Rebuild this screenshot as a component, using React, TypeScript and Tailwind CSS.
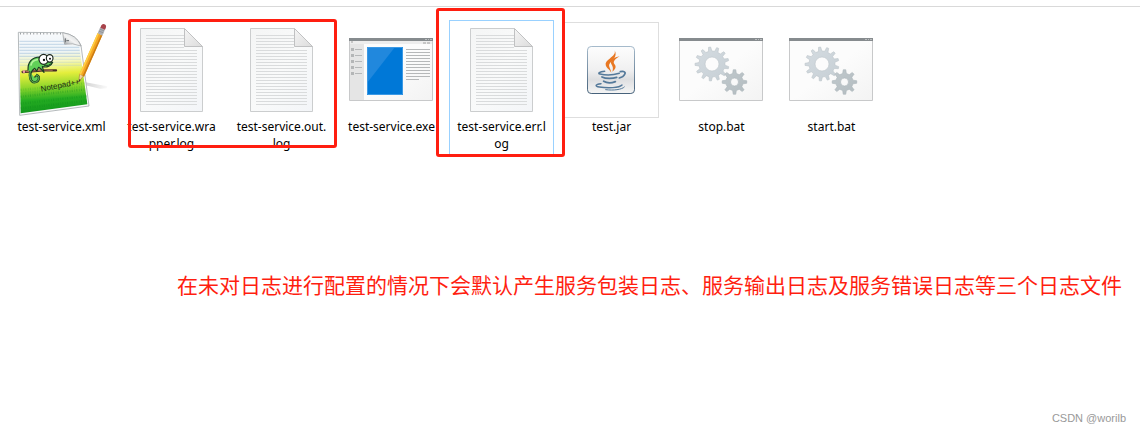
import type { ReactNode } from 'react';

type FileItem = {
  name: string;
  lines: string[];
  icon: ReactNode;
  state?: 'selected' | 'framed';
};

// Outline of a gear with rounded-off teeth
function gearPath(cx: number, cy: number, outer: number, inner: number, hole: number, teeth: number, turn: number) {
  const step = (Math.PI * 2) / teeth;
  const point = (r: number, a: number) => `${(cx + r * Math.cos(a)).toFixed(2)} ${(cy + r * Math.sin(a)).toFixed(2)}`;
  const parts: string[] = [];
  for (let i = 0; i < teeth; i++) {
    const a = turn + i * step;
    parts.push(
      point(inner, a - step * 0.27),
      point(outer, a - step * 0.13),
      point(outer, a + step * 0.13),
      point(inner, a + step * 0.27)
    );
  }
  return `M${parts.join('L')}Z M${cx + hole} ${cy}a${hole} ${hole} 0 1 0 ${-hole * 2} 0a${hole} ${hole} 0 1 0 ${hole * 2} 0Z`;
}

function NotepadIcon() {
  return (
    <svg className="w-24 h-24" viewBox="39 66 288 288" aria-hidden="true">
      <defs>
        <linearGradient id="np-page" x1="0" y1="0" x2="0.05" y2="1">
          <stop offset="0" stopColor="#f8fafc" />
          <stop offset="0.24" stopColor="#edf4f8" />
          <stop offset="0.36" stopColor="#f6f8c4" />
          <stop offset="0.52" stopColor="#e4ee3c" />
          <stop offset="0.68" stopColor="#8fd62c" />
          <stop offset="0.84" stopColor="#25ad22" />
          <stop offset="1" stopColor="#12961c" />
        </linearGradient>
        <linearGradient id="np-curl" x1="0" y1="1" x2="1" y2="0">
          <stop offset="0" stopColor="#8d9296" />
          <stop offset="0.45" stopColor="#f4f4f4" />
          <stop offset="1" stopColor="#c4c8ca" />
        </linearGradient>
        <linearGradient id="np-shadow" x1="0" y1="0" x2="1" y2="0">
          <stop offset="0" stopColor="#c8c8c8" />
          <stop offset="1" stopColor="#fafafa" />
        </linearGradient>
      </defs>
      <path d="M236 243L322 259L320 265L300 266L238 251Z" fill="url(#np-shadow)" />
      <path d="M55 97L188 98Q230 105 243 136L267 318L59 346Z" fill="#fafafa" stroke="#a7adb0" strokeWidth="2.5" />
      <path d="M58 102L186 103L194 133L238 137L262 313L62 340Z" fill="url(#np-page)" />
      <g stroke="#a9c6dc" strokeWidth="2">
        <path d="M58 124H192M58 133H194M58 142H238M58 151H239M58 160H240M58 169H241" />
        <path d="M58 178H242M58 187H243M58 196H244" opacity="0.5" />
      </g>
      <path d="M62 311L260 288M62 290L257 268M62 325L261 302" stroke="#0d8a1b" strokeWidth="7" strokeDasharray="3 5 2 4" opacity="0.35" />
      <path d="M62 270L253 250M62 281L255 259" stroke="#48b824" strokeWidth="7" strokeDasharray="3 5 2 4" opacity="0.4" />
      <path d="M60 101H184" stroke="#8d9295" strokeWidth="5" strokeDasharray="2.5 7.5" />
      <path d="M188 98Q231 104 243 138Q218 128 194 133Q190 116 188 98Z" fill="url(#np-curl)" stroke="#94999c" strokeWidth="2" />
      <path d="M196 115V127M199 122H207" stroke="#62686b" strokeWidth="3" />
      <path d="M68 216L130 211L168 211" fill="none" stroke="#472c25" strokeWidth="7" strokeLinecap="round" />
      <path d="M78 215L132 210L158 211" fill="none" stroke="#a76f5a" strokeWidth="3" />
      <circle cx="72" cy="215" r="4" fill="#ef9aa4" />
      <path
        d="M84 211C83 185 94 172 120 171C129 181 146 186 158 187C154 197 142 203 127 200L132 217L124 208L116 202L110 213L104 205C93 212 89 226 94 239C99 251 116 247 118 235C119 224 105 224 104 233"
        fill="#61d158"
        stroke="#193a22"
        strokeWidth="3.5"
        strokeLinejoin="round"
      />
      <path d="M91 213C86 231 92 246 103 247C119 247 121 225 108 225" fill="none" stroke="#24482a" strokeWidth="7" />
      <path d="M91 213C86 231 92 246 103 247C119 247 121 225 108 225" fill="none" stroke="#63be50" strokeWidth="3" />
      <path d="M93 195Q96 181 112 179" fill="none" stroke="#b3f29a" strokeWidth="5" strokeLinecap="round" />
      <ellipse cx="131" cy="178" rx="14" ry="15" fill="#fff" stroke="#1d2820" strokeWidth="3.5" />
      <ellipse cx="149" cy="175" rx="10" ry="11" fill="#fff" stroke="#1d2820" strokeWidth="3.5" />
      <circle cx="132" cy="180" r="3.5" fill="#111" />
      <circle cx="150" cy="176" r="3" fill="#111" />
      <path d="M132 196Q146 199 156 190" fill="none" stroke="#193a22" strokeWidth="3" />
      <text x="124" y="275" fontSize="24" fill="#1c2a14" transform="rotate(-11 124 275)" className="font-['Liberation_Sans',sans-serif]">
        Notepad++
      </text>
      <path d="M236 246L239 222L250 228Z" fill="#f0cf9c" stroke="#9a6d31" strokeWidth="1.5" />
      <path d="M236 247L238 237L242 240Z" fill="#36322c" />
      <path d="M238 223L293 99L307 106L252 230Q246 223 238 223Z" fill="#f5a623" />
      <path d="M238 223L293 99L297 101L243 224Z" fill="#ffd046" />
      <path d="M248 227L303 104L307 106L252 230Z" fill="#cb7b13" />
      <path d="M293 100L301 82L315 88L307 107Z" fill="#aeb1b5" />
      <path d="M296 93L311 99M299 87L313 93" stroke="#74797e" strokeWidth="1.5" />
      <path d="M301 83L304 76Q310 69 316 74Q321 78 315 89Z" fill="#a8434b" />
    </svg>
  );
}

function LogIcon() {
  return (
    <svg className="w-16 h-[84px]" viewBox="0 0 64 84" aria-hidden="true">
      <defs>
        <linearGradient id="log-page" x1="0" y1="0" x2="1" y2="1">
          <stop offset="0" stopColor="#f4f5f5" />
          <stop offset="0.5" stopColor="#f9fafa" />
          <stop offset="1" stopColor="#f3f5f8" />
        </linearGradient>
        <linearGradient id="log-fold" x1="0" y1="0" x2="1" y2="1">
          <stop offset="0" stopColor="#f5f5f5" />
          <stop offset="1" stopColor="#dcdcdc" />
        </linearGradient>
      </defs>
      <path d="M1.5 0.5H45L63.5 18.5V83.5H1.5Z" fill="url(#log-page)" stroke="#cbcdce" />
      <path
        d="M7 7.5H45M7 10.5H45M7 13.5H45M7 16.5H45M7 19.5H45M7 22.5H58M7 25.5H58M7 28.5H58M7 31.5H58M7 34.5H58M7 37.5H58M7 40.5H58M7 43.5H58M7 46.5H58M7 49.5H58M7 52.5H58M7 55.5H58M7 58.5H58M7 61.5H58M7 64.5H58M7 67.5H58M7 70.5H58M7 73.5H58M7 76.5H58"
        stroke="#d9dbdc"
      />
      <path d="M45.5 0.5V18.5H63.5Z" fill="url(#log-fold)" stroke="#c0c1c2" />
    </svg>
  );
}

function WindowFrame({ children }: { children: ReactNode }) {
  return (
    <svg className="w-[84px] h-16" viewBox="0 0 84 64" aria-hidden="true">
      <defs>
        <linearGradient id="win-body" x1="0" y1="0" x2="1" y2="1">
          <stop offset="0.5" stopColor="#fcfcfc" />
          <stop offset="1" stopColor="#f3f3f3" />
        </linearGradient>
      </defs>
      <path d="M0.5 0.5H83.5V62.5H0.5Z" fill="url(#win-body)" stroke="#c8c9ca" />
      {children}
      <path d="M0 0H84V3H0Z" fill="#868b8e" />
      <path d="M76 1.5H78M79 1.5H80M81 1.5H83" stroke="#b9bcbe" />
    </svg>
  );
}

function ExeIcon() {
  return (
    <WindowFrame>
      <path d="M1 3H83V6H1Z" fill="#ededed" />
      <path d="M1 6H15V62H1Z" fill="#e5e5e5" />
      <path d="M2 3H4V5H2ZM74 4H77V6H74ZM78 4H81V6H78Z" fill="#c6c6c6" />
      <path d="M2 10H5V13H2ZM2 16H5V19H2ZM2 22H5V25H2ZM2 28H5V31H2ZM2 34H5V37H2Z" fill="#b4b6b7" />
      <path d="M6 11.5H13M6 17.5H13M6 23.5H13M6 29.5H13M6 35.5H13" stroke="#b6b8b9" />
      <path d="M18 9H54V57H18Z" fill="#0078d7" />
      <path d="M18 9H46L18 45Z" fill="#2188dd" />
      <path d="M18.5 9.5H53.5V56.5H18.5Z" fill="none" stroke="#3b99e5" />
      <path d="M57 11.5H81M57 14.5H81M57 17.5H81M57 20.5H81M57 23.5H81M57 26.5H81M57 29.5H81M57 32.5H81M57 35.5H81M57 38.5H81M57 41.5H70" stroke="#b6b8b9" />
    </WindowFrame>
  );
}

function BatIcon() {
  return (
    <WindowFrame>
      <defs>
        <linearGradient id="gear-light" x1="0" y1="0" x2="1" y2="1">
          <stop offset="0" stopColor="#d5dce1" />
          <stop offset="1" stopColor="#c6cfd5" />
        </linearGradient>
        <linearGradient id="gear-dark" x1="0" y1="0" x2="1" y2="1">
          <stop offset="0" stopColor="#c1c9cd" />
          <stop offset="1" stopColor="#b3bcc0" />
        </linearGradient>
      </defs>
      <path d={gearPath(33, 26, 17, 13, 7, 13, 0.22)} fill="url(#gear-light)" stroke="#bcc5ca" strokeWidth="0.6" strokeLinejoin="round" fillRule="evenodd" />
      <path d={gearPath(55.5, 44, 12.3, 8.7, 4, 8, 0)} fill="url(#gear-dark)" stroke="#aab4b8" strokeWidth="0.6" strokeLinejoin="round" fillRule="evenodd" />
    </WindowFrame>
  );
}

function JarIcon() {
  return (
    <svg className="w-12 h-12" viewBox="81 108 144 144" aria-hidden="true">
      <defs>
        <linearGradient id="jar-tile" x1="0" y1="0" x2="0" y2="1">
          <stop offset="0" stopColor="#fdfdfd" />
          <stop offset="0.5" stopColor="#f0f0f1" />
          <stop offset="0.7" stopColor="#dedfe1" />
          <stop offset="1" stopColor="#f5f5f5" />
        </linearGradient>
        <linearGradient id="jar-edge" x1="0" y1="0" x2="0" y2="1">
          <stop offset="0" stopColor="#a5bacb" />
          <stop offset="1" stopColor="#47627b" />
        </linearGradient>
      </defs>
      <rect x="82.5" y="109.5" width="141" height="141" rx="11" fill="url(#jar-tile)" stroke="url(#jar-edge)" strokeWidth="3" />
      <path d="M164 121C170 140 137 147 137 163C137 173 148 178 154 188C152 176 145 170 148 163C152 153 175 143 164 121Z" fill="#e87722" />
      <path d="M179 139C163 142 151 151 153 160C155 167 162 170 157 185C170 175 168 168 163 162C158 155 165 147 179 139Z" fill="#e87722" />
      <g fill="none" stroke="#54799a" strokeLinecap="round">
        <path d="M134 184C118 185 112 190 120 192C139 197 165 194 178 190" strokeWidth="4.5" />
        <path d="M181 185C192 182 198 187 194 193C191 199 185 202 178 204" strokeWidth="5" />
        <path d="M126 201C138 207 158 206 170 202" strokeWidth="5.5" />
        <path d="M131 214C141 220 156 219 166 215" strokeWidth="5.5" />
        <path d="M123 221C105 223 104 229 118 231C143 235 178 234 186 225" strokeWidth="4.5" />
        <path d="M137 239C160 242 186 239 193 231" strokeWidth="3" />
      </g>
    </svg>
  );
}

const files: FileItem[] = [
  { name: 'test-service.xml', lines: ['test-service.xml'], icon: <NotepadIcon /> },
  { name: 'test-service.wrapper.log', lines: ['test-service.wra', 'pper.log'], icon: <LogIcon /> },
  { name: 'test-service.out.log', lines: ['test-service.out.', 'log'], icon: <LogIcon /> },
  { name: 'test-service.exe', lines: ['test-service.exe'], icon: <ExeIcon /> },
  { name: 'test-service.err.log', lines: ['test-service.err.l', 'og'], icon: <LogIcon />, state: 'selected' },
  { name: 'test.jar', lines: ['test.jar'], icon: <JarIcon />, state: 'framed' },
  { name: 'stop.bat', lines: ['stop.bat'], icon: <BatIcon /> },
  { name: 'start.bat', lines: ['start.bat'], icon: <BatIcon /> },
];

function FileTile({ file }: { file: FileItem }) {
  return (
    <button
      type="button"
      aria-label={file.name}
      className={`w-[105px] flex flex-col items-center border pt-px pb-[3px] ${
        file.state === 'selected' ? 'border-[#99d1ff]' : 'border-transparent'
      }`}
    >
      <span className="w-full pl-[3px]">
        <span
          className={`w-24 h-24 flex items-center justify-center ${
            file.state === 'framed' ? 'outline outline-1 -outline-offset-1 outline-[#dedede]' : ''
          }`}
        >
          {file.icon}
        </span>
      </span>
      <span className="text-xs leading-[17px] text-black">
        {file.lines.map((line) => (
          <span key={line} className="block whitespace-nowrap">
            {line}
          </span>
        ))}
      </span>
    </button>
  );
}

export default function App() {
  return (
    <div className="min-h-screen bg-white flex flex-col pt-[6px] font-['Noto_Sans','Noto_Sans_CJK_SC',sans-serif]">
      <main className="relative border-t border-[#d9d9d9] pt-[13px]">
        <ul className="flex items-start gap-[5px] pl-[9px]">
          {files.map((file) => (
            <li key={file.name}>
              <FileTile file={file} />
            </li>
          ))}
        </ul>

        {/* Annotation frames over the log files */}
        <div className="absolute left-32 top-3 w-[209px] h-[129px] border-3 border-[#ff1e10] rounded-[3px] pointer-events-none" />
        <div className="absolute left-[436px] top-px w-[129px] h-[149px] border-3 border-[#ff1e10] rounded-[3px] pointer-events-none" />
      </main>

      <p className="mt-[113px] pr-[18px] text-right text-[21px] leading-[30px] text-[#ff1e10] font-['Noto_Sans_CJK_SC',sans-serif]">
        在未对日志进行配置的情况下会默认产生服务包装日志、服务输出日志及服务错误日志等三个日志文件
      </p>

      <footer className="mt-auto pb-[6px] pr-[14px] text-right text-[11px] leading-4 text-[#999999] font-['Liberation_Sans',sans-serif]">
        CSDN @worilb
      </footer>
    </div>
  );
}
